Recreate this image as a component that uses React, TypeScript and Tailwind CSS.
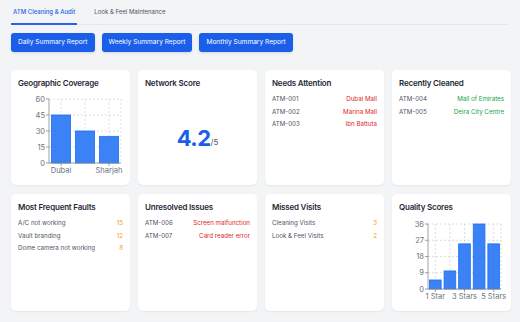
import React from "react";

const FONT = { fontFamily: "Inter, 'Noto Sans', sans-serif" };

function Card({ title, children, className = "" }: { title: string; children?: React.ReactNode; className?: string }) {
  return (
    <div className={"flex flex-col rounded-[5px] bg-white p-[7px] shadow-[0_1px_2px_rgba(0,0,0,0.06)] " + className}>
      <div className="text-[8px] font-semibold leading-[12px] tracking-[-0.2px] text-[#1f2937]">{title}</div>
      {children}
    </div>
  );
}

function Row({ left, right, rightClass }: { left: string; right: string; rightClass: string }) {
  return (
    <div className="flex items-center justify-between text-[6.2px] leading-[12.5px]">
      <span className="text-[#4b5563]">{left}</span>
      <span className={rightClass}>{right}</span>
    </div>
  );
}

type ChartProps = {
  width: number;
  height: number;
  left: number;
  right: number;
  top: number;
  bottom: number;
  max: number;
  ticks: number[];
  values: number[];
  labels: (string | null)[];
};

function BarChart({ width, height, left, right, top, bottom, max, ticks, values, labels }: ChartProps) {
  const plotW = right - left;
  const plotH = bottom - top;
  const band = plotW / values.length;
  const gap = band * 0.1;
  const y = (v: number) => bottom - (v / max) * plotH;
  return (
    <svg width={width} height={height} className="block overflow-visible">
      {ticks.map((t) => (
        <line key={"h" + t} x1={left} x2={right} y1={y(t)} y2={y(t)} stroke="#d1d5db" strokeWidth={0.8} strokeDasharray="2 2" />
      ))}
      {values.map((_, i) => (
        <line key={"v" + i} x1={left + band * (i + 0.5)} x2={left + band * (i + 0.5)} y1={top} y2={bottom} stroke="#d1d5db" strokeWidth={0.8} strokeDasharray="2 2" />
      ))}
      <line x1={right} x2={right} y1={top} y2={bottom} stroke="#d1d5db" strokeWidth={0.8} strokeDasharray="2 2" />
      {values.map((v, i) => (
        <rect
          key={"b" + i}
          x={left + band * i + gap}
          y={y(v)}
          width={band - gap * 2}
          height={bottom - y(v)}
          fill="#3b82f6"
          stroke="#1d6ff2"
          strokeWidth={0.8}
        />
      ))}
      <line x1={left} x2={left} y1={top} y2={bottom} stroke="#888" strokeWidth={0.8} />
      <line x1={left} x2={right} y1={bottom} y2={bottom} stroke="#888" strokeWidth={0.8} />
      {ticks.map((t) => (
        <g key={"t" + t}>
          <line x1={left - 3} x2={left} y1={y(t)} y2={y(t)} stroke="#888" strokeWidth={0.8} />
          <text x={left - 4} y={y(t) + 2.5} textAnchor="end" fontSize={7.5} fill="#6b7280" fontFamily="Inter, sans-serif">
            {t}
          </text>
        </g>
      ))}
      {labels.map((l, i) =>
        l ? (
          <g key={"l" + i}>
            <line x1={left + band * (i + 0.5)} x2={left + band * (i + 0.5)} y1={bottom} y2={bottom + 3} stroke="#888" strokeWidth={0.8} />
            <text x={left + band * (i + 0.5)} y={bottom + 9.5} textAnchor="middle" fontSize={7.5} fill="#6b7280" fontFamily="Inter, sans-serif">
              {l}
            </text>
          </g>
        ) : null
      )}
    </svg>
  );
}

export default function App() {
  return (
    <div className="min-h-screen bg-[#f3f4f6] px-[11px]" style={FONT}>
      <div className="flex gap-[15px] border-b border-[#e5e7eb]">
        <div className="-mb-px border-b-2 border-[#2563eb] px-[2px] pb-[6px] pt-[7px] text-[6px] font-medium leading-[10px] text-[#2563eb]">
          ATM Cleaning &amp; Audit
        </div>
        <div className="px-[2px] pb-[6px] pt-[7px] text-[6px] leading-[10px] text-[#4b5563]">Look &amp; Feel Maintenance</div>
      </div>

      <div className="mt-[8px] flex gap-[7px]">
        {["Daily Summary Report", "Weekly Summary Report", "Monthly Summary Report"].map((b) => (
          <div key={b} className="flex h-[19px] items-center rounded-[3px] bg-[#1a5ee9] px-[7px] text-[6.6px] text-white shadow-sm">
            {b}
          </div>
        ))}
      </div>

      <div className="mt-[18px] grid w-[500px] grid-cols-4 grid-rows-[115px_117px] gap-x-[8px] gap-y-[9px]">
        <Card title="Geographic Coverage">
          <div className="mt-[3px]">
            <BarChart
              width={105}
              height={82}
              left={31}
              right={103}
              top={7}
              bottom={71}
              max={60}
              ticks={[0, 15, 30, 45, 60]}
              values={[45, 30, 25]}
              labels={["Dubai", null, "Sharjah"]}
            />
          </div>
        </Card>

        <Card title="Network Score">
          <div className="flex flex-1 items-center justify-center pt-[8px]">
            <span className="text-[22px] font-bold leading-none tracking-[-0.5px] text-[#1a5ee9]">4.2</span>
            <span className="mt-[8px] text-[8px] text-[#4b5563]">/5</span>
          </div>
        </Card>

        <Card title="Needs Attention">
          <div className="mt-[4px]">
            <Row left="ATM-001" right="Dubai Mall" rightClass="text-[#dc2626]" />
            <Row left="ATM-002" right="Marina Mall" rightClass="text-[#dc2626]" />
            <Row left="ATM-003" right="Ibn Battuta" rightClass="text-[#dc2626]" />
          </div>
        </Card>

        <Card title="Recently Cleaned">
          <div className="mt-[4px]">
            <Row left="ATM-004" right="Mall of Emirates" rightClass="text-[#16a34a]" />
            <Row left="ATM-005" right="Deira City Centre" rightClass="text-[#16a34a]" />
          </div>
        </Card>

        <Card title="Most Frequent Faults">
          <div className="mt-[4px]">
            <Row left="A/C not working" right="15" rightClass="text-[#f59e0b]" />
            <Row left="Vault branding" right="12" rightClass="text-[#f59e0b]" />
            <Row left="Dome camera not working" right="8" rightClass="text-[#f59e0b]" />
          </div>
        </Card>

        <Card title="Unresolved Issues">
          <div className="mt-[4px]">
            <Row left="ATM-006" right="Screen malfunction" rightClass="text-[#dc2626]" />
            <Row left="ATM-007" right="Card reader error" rightClass="text-[#dc2626]" />
          </div>
        </Card>

        <Card title="Missed Visits">
          <div className="mt-[4px]">
            <Row left="Cleaning Visits" right="3" rightClass="text-[#f59e0b]" />
            <Row left="Look & Feel Visits" right="2" rightClass="text-[#f59e0b]" />
          </div>
        </Card>

        <Card title="Quality Scores">
          <div className="mt-[3px]">
            <BarChart
              width={104}
              height={84}
              left={29}
              right={102}
              top={8}
              bottom={73}
              max={36}
              ticks={[0, 9, 18, 27, 36]}
              values={[5, 10, 25, 36, 25]}
              labels={["1 Star", null, "3 Stars", null, "5 Stars"]}
            />
          </div>
        </Card>
      </div>
    </div>
  );
}
